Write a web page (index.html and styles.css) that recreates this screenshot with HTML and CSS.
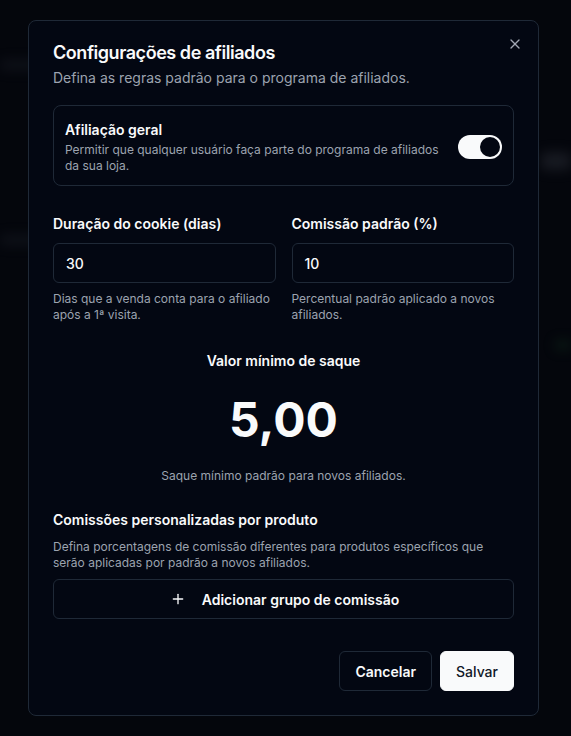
FILE: index.html
```html
<!DOCTYPE html>
<html lang="pt-BR">
<head>
<meta charset="utf-8">
<title>Configurações de afiliados</title>
<link rel="stylesheet" href="styles.css">
</head>
<body>
<div class="backdrop">
  <div class="bg-col bg-left">
    <div class="smudge s1"></div>
    <div class="smudge s2"></div>
  </div>
  <div class="bg-col bg-right">
    <div class="smudge s3"></div>
    <div class="smudge s4"></div>
  </div>
</div>
<div class="overlay">
  <div class="dialog" role="dialog">
    <button class="close" aria-label="Fechar">
      <svg viewBox="0 0 24 24" width="16" height="16" fill="none" stroke="currentColor" stroke-width="2" stroke-linecap="round" stroke-linejoin="round"><path d="M18 6 6 18"/><path d="m6 6 12 12"/></svg>
    </button>
    <h2 class="title">Configurações de afiliados</h2>
    <p class="subtitle">Defina as regras padrão para o programa de afiliados.</p>

    <div class="switch-card">
      <div class="switch-text">
        <div class="switch-title">Afiliação geral</div>
        <div class="switch-desc">Permitir que qualquer usuário faça parte do programa de afiliados da sua loja.</div>
      </div>
      <div class="switch on"><span class="knob"></span></div>
    </div>

    <div class="fields">
      <div class="field">
        <label class="label">Duração do cookie (dias)</label>
        <div class="input">30</div>
        <p class="help">Dias que a venda conta para o afiliado após a 1ª visita.</p>
      </div>
      <div class="field">
        <label class="label">Comissão padrão (%)</label>
        <div class="input">10</div>
        <p class="help">Percentual padrão aplicado a novos afiliados.</p>
      </div>
    </div>

    <div class="min-section">
      <div class="min-label">Valor mínimo de saque</div>
      <div class="min-value">5,00</div>
      <p class="min-help">Saque mínimo padrão para novos afiliados.</p>
    </div>

    <div class="custom">
      <div class="custom-title">Comissões personalizadas por produto</div>
      <p class="custom-desc">Defina porcentagens de comissão diferentes para produtos específicos que serão aplicadas por padrão a novos afiliados.</p>
      <button class="add-btn">
        <svg viewBox="0 0 24 24" width="16" height="16" fill="none" stroke="currentColor" stroke-width="2" stroke-linecap="round" stroke-linejoin="round"><path d="M5 12h14"/><path d="M12 5v14"/></svg>
        <span>Adicionar grupo de comissão</span>
      </button>
    </div>

    <div class="footer">
      <button class="btn btn-outline">Cancelar</button>
      <button class="btn btn-primary">Salvar</button>
    </div>
  </div>
</div>
</body>
</html>
```

FILE: styles.css
```css
* { box-sizing: border-box; }
html, body {
  margin: 0;
  padding: 0;
  background: #04060c;
  font-family: Inter, "Noto Sans", sans-serif;
  color: #f9fafb;
  height: 736px;
  overflow: hidden;
}
.backdrop {
  display: flex;
  justify-content: space-between;
  height: 736px;
  opacity: 0.5;
}
.bg-col { display: flex; flex-direction: column; }
.smudge {
  background: #1a1d26;
  filter: blur(6px);
  border-radius: 4px;
}
.s1 { width: 40px; height: 10px; margin-top: 60px; }
.s2 { width: 40px; height: 10px; margin-top: 165px; }
.bg-right { align-items: flex-end; }
.s3 { width: 30px; height: 18px; margin-top: 152px; background: #2a2d36; }
.s4 { width: 16px; height: 10px; margin-top: 170px; background: #0f2a1a; }

.overlay {
  position: fixed;
  inset: 0;
  display: flex;
  justify-content: center;
  padding-top: 20px;
  padding-right: 4px;
}
.dialog {
  position: relative;
  width: 511px;
  height: 696px;
  background: #030712;
  border: 1px solid #1f2937;
  border-radius: 8px;
  padding: 23px 24px 24px;
  display: flex;
  flex-direction: column;
}
.close {
  position: absolute;
  top: 15px;
  right: 15px;
  width: 16px;
  height: 16px;
  padding: 0;
  border: 0;
  background: none;
  color: #a1a7b3;
  display: flex;
}
.title {
  margin: 0;
  font-size: 18px;
  line-height: 18px;
  font-weight: 600;
  letter-spacing: -0.025em;
}
.subtitle {
  margin: 6px 0 0;
  font-size: 14px;
  line-height: 20px;
  color: #9ca3af;
}
.switch-card {
  margin-top: 17px;
  border: 1px solid #1f2937;
  border-radius: 8px;
  padding: 14px 11px 11px;
  display: flex;
  align-items: center;
  justify-content: space-between;
  gap: 16px;
}
.switch-title {
  font-size: 14px;
  line-height: 20px;
  font-weight: 600;
}
.switch-desc {
  margin-top: 2px;
  font-size: 12px;
  line-height: 16px;
  color: #9ca3af;
  max-width: 385px;
}
.switch {
  flex: none;
  width: 44px;
  height: 24px;
  border-radius: 12px;
  background: #f9fafb;
  padding: 2px;
  display: flex;
  justify-content: flex-end;
}
.knob {
  width: 20px;
  height: 20px;
  border-radius: 50%;
  background: #030712;
}
.fields {
  margin-top: 28px;
  display: grid;
  grid-template-columns: 1fr 1fr;
  gap: 16px;
}
.field { display: flex; flex-direction: column; }
.label {
  font-size: 14px;
  line-height: 20px;
  font-weight: 600;
}
.input {
  margin-top: 9px;
  height: 40px;
  border: 1px solid #1f2937;
  border-radius: 6px;
  padding: 0 12px;
  display: flex;
  align-items: center;
  font-size: 14px;
  font-weight: 500;
}
.help {
  margin: 8px 0 0;
  font-size: 12px;
  line-height: 16px;
  color: #9ca3af;
}
.min-section {
  margin-top: 28px;
  display: flex;
  flex-direction: column;
  align-items: center;
}
.min-label {
  font-size: 14px;
  line-height: 20px;
  font-weight: 600;
}
.min-value {
  margin-top: 25px;
  font-size: 48px;
  line-height: 48px;
  font-weight: 700;
}
.min-help {
  margin: 24px 0 0;
  font-size: 12px;
  line-height: 16px;
  color: #9ca3af;
}
.custom {
  margin-top: 26px;
  display: flex;
  flex-direction: column;
}
.custom-title {
  font-size: 14px;
  line-height: 20px;
  font-weight: 600;
}
.custom-desc {
  margin: 9px 0 0;
  font-size: 12px;
  line-height: 16px;
  color: #9ca3af;
}
.add-btn {
  margin-top: 8px;
  height: 40px;
  border: 1px solid #1f2937;
  border-radius: 6px;
  background: transparent;
  color: #f9fafb;
  font-family: inherit;
  font-size: 14px;
  font-weight: 600;
  display: flex;
  align-items: center;
  justify-content: center;
  gap: 16px;
  padding-right: 4px;
}
.footer {
  margin-top: 32px;
  display: flex;
  justify-content: flex-end;
  gap: 8px;
}
.btn {
  height: 40px;
  border-radius: 6px;
  padding: 0 15px;
  font-family: inherit;
  font-size: 14px;
  font-weight: 500;
}
.btn-outline {
  background: transparent;
  border: 1px solid #1f2937;
  color: #f9fafb;
  font-weight: 600;
  padding: 0 15px;
}
.btn-primary {
  background: #f9fafb;
  border: 1px solid #f9fafb;
  color: #111827;
}
```
